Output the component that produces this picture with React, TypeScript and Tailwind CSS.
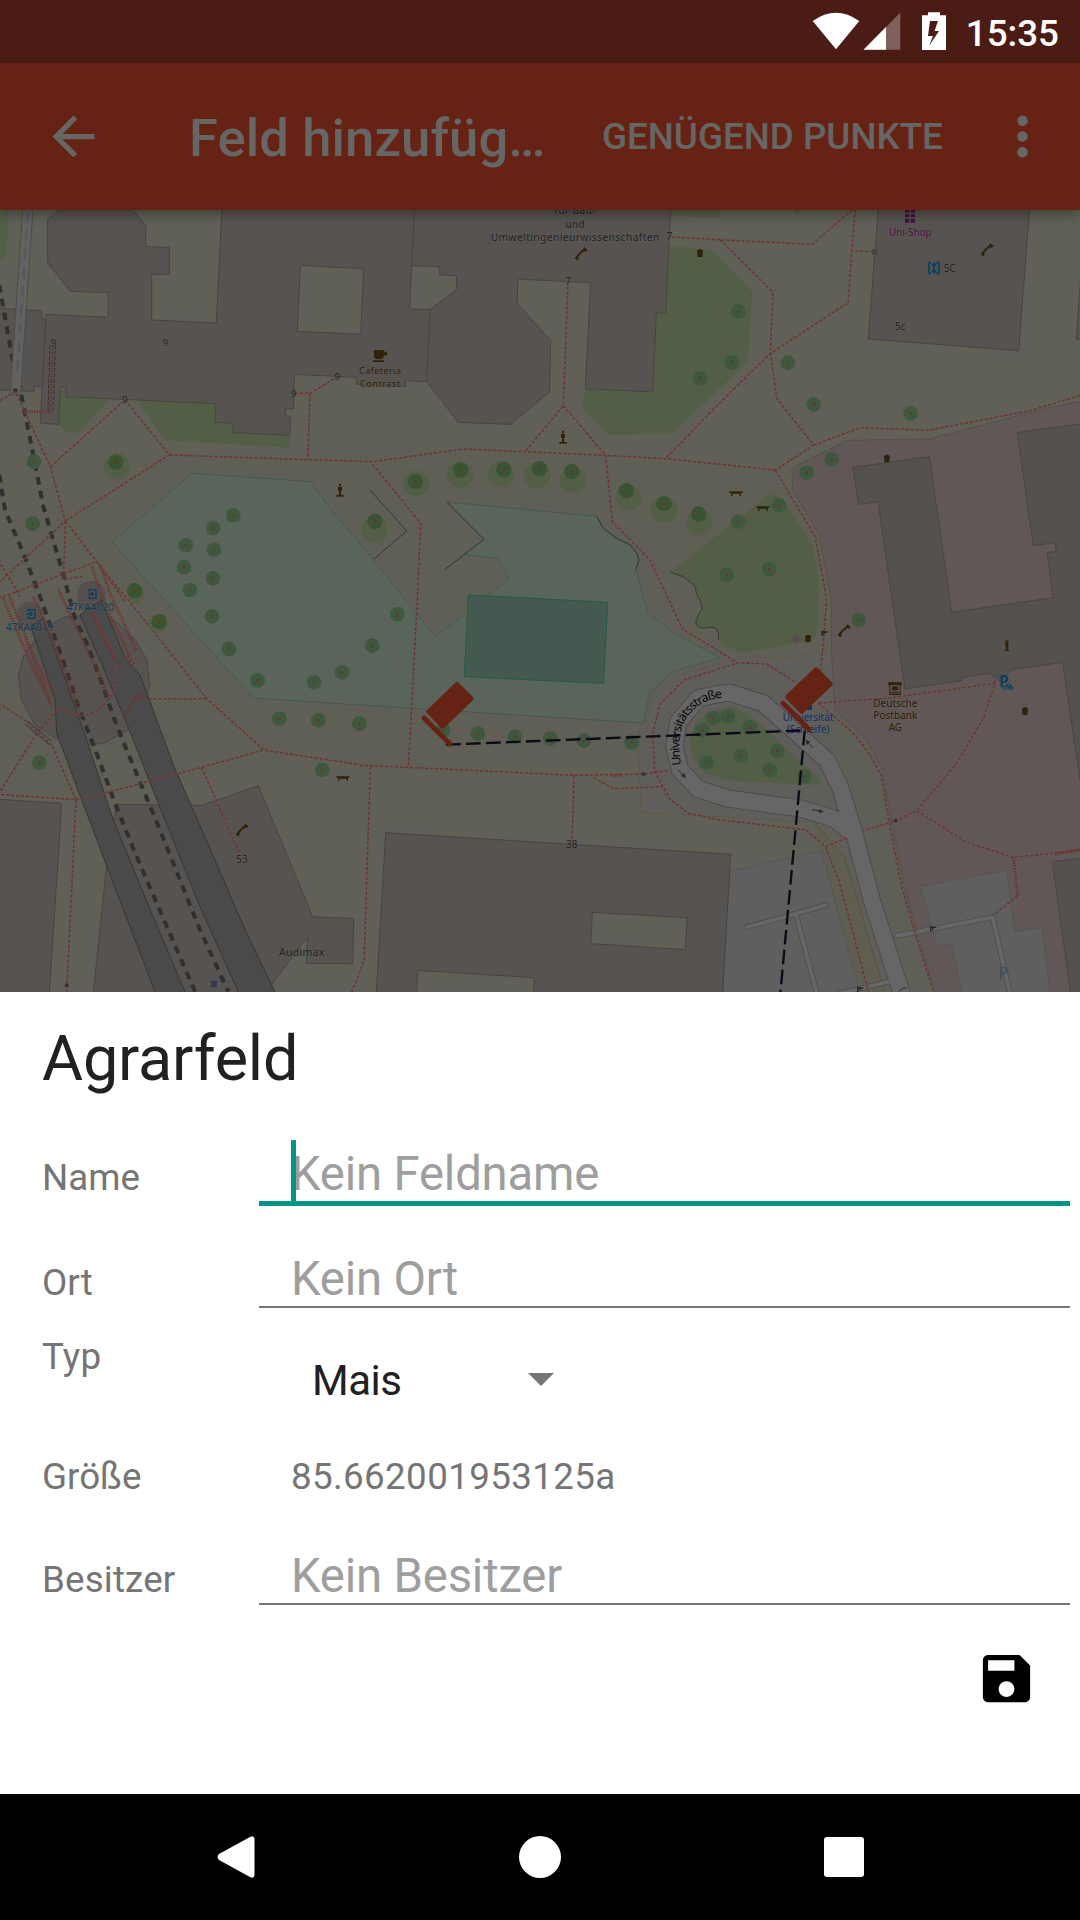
import React from "react";

type Point = [number, number];

const TREES: Point[] = [
  [102, 785], [98, 971], [700, 946], [640, 984], [558, 1036], [642, 1049], [552, 1101], [639, 1135], [570, 1170],
  [636, 1249], [687, 1347], [773, 1441], [942, 1447], [1026, 1417], [838, 1556], [955, 1561], [1078, 1571],
  [118, 1688], [967, 1710], [2101, 535], [2215, 335], [2195, 487], [2364, 488], [2441, 613], [2732, 640],
  [2420, 818], [2495, 778], [2337, 916], [2215, 965], [2180, 1125], [2307, 1107], [2576, 1259], [1192, 1243],
  [1117, 1337], [1330, 1590], [1434, 1601], [1545, 1610], [1651, 1615], [1751, 1622], [1895, 1627],
  [2106, 1592], [2140, 1554], [2120, 1687], [2184, 1550], [2250, 1582], [2332, 1653], [2223, 1667],
  [2310, 1711], [2413, 1730],
];

const BIG_TREES: [number, number, number, number][] = [
  [347, 787, 351, 799], [404, 1172, 408, 1182], [478, 1265, 474, 1272], [1246, 845, 1248, 850], [1382, 810, 1380, 824],
  [1511, 808, 1503, 822], [1618, 806, 1611, 827], [1715, 815, 1719, 840], [1879, 872, 1885, 893],
  [1992, 911, 1992, 930], [2096, 942, 2097, 967], [1125, 964, 1124, 987],
];

function Trees() {
  return (
    <g>
      {BIG_TREES.map(([x, y, hx, hy], i) => {
        const small = i === 1 || i === 2;
        return (
          <g key={i}>
            <circle cx={hx} cy={hy} r={small ? 26 : 39} fill="#525e46" />
            <circle cx={x} cy={y} r={23} fill={i < 3 ? "#3a5430" : "#3a5334"} />
            <circle cx={x} cy={y} r={4.5} fill="#5a3c20" />
          </g>
        );
      })}
      {TREES.map(([x, y], i) => (
        <g key={i}>
          <circle cx={x} cy={y} r={22} fill="#3f573e" />
          <circle cx={x} cy={y} r={4.5} fill="#5a4022" />
        </g>
      ))}
    </g>
  );
}

function Flag({ x, y }: { x: number; y: number }) {
  return (
    <g transform={`translate(${x} ${y})`} fill="#662314" stroke="#662314" strokeLinejoin="round" strokeLinecap="round">
      <path d="M100 -2 L143 41 L57 123 L15 80 Z" transform="translate(-79 0) translate(79 0)" strokeWidth="14" />
      <path d="M0 104 L-1 104" strokeWidth="0" />
      <path d="M1 104 L79 182" strokeWidth="15" transform="translate(0 -5)" />
    </g>
  );
}

function Phone({ x, y }: { x: number; y: number }) {
  return (
    <g transform={`translate(${x} ${y})`} stroke="#30220a" fill="none">
      <path d="M-13 12 Q-4 -4 13 -13" strokeWidth="6" />
      <path d="M-16 10 L-9 17 M8 -16 L17 -8" strokeWidth="8" />
    </g>
  );
}

function Bin({ x, y }: { x: number; y: number }) {
  return <path transform={`translate(${x} ${y})`} d="M-9 -7 H9 L7 11 H-7 Z M-9 -9 H9 V-6 H-9 Z M-5 -12 H5 V-8 H-5 Z" fill="#30220a" />;
}

function Bench({ x, y }: { x: number; y: number }) {
  return <path transform={`translate(${x} ${y})`} d="M-20 -6 H20 V-2 H-20 Z M-15 0 H-11 V8 H-15 Z M11 0 H15 V8 H11 Z M-15 -2 H15 V1 H-15 Z" fill="#30220a" />;
}

function Statue({ x, y }: { x: number; y: number }) {
  return <path transform={`translate(${x} ${y})`} d="M-3 -20 H3 V-13 H-3 Z M-6 -11 H6 V1 H3 V14 H11 V19 H-11 V14 H-3 V1 H-6 Z" fill="#30220a" />;
}

function Gate({ x, y }: { x: number; y: number }) {
  return <path transform={`translate(${x} ${y})`} d="M-7 -8 V8 M-7 -4 H10 M-1 -4 V3" stroke="#222" strokeWidth="4" fill="none" />;
}

function Subway({ x, y }: { x: number; y: number }) {
  return (
    <path
      transform={`translate(${x} ${y})`}
      d="M-9 -7 V-13 H11 V13 H-9 V7 M-15 0 H3 M-3 -6 L3 0 L-3 6"
      stroke="#073f5c"
      strokeWidth="4"
      fill="none"
    />
  );
}

function MapText({ x, y, w, size = 31, fill = "#222222", children }: { x: number; y: number; w?: number; size?: number; fill?: string; children: string }) {
  return (
    <text x={x} y={y} fontSize={size} textAnchor="middle" fill={fill} textLength={w} stroke="#65625d" strokeWidth="5" strokeOpacity="0.4" style={{ paintOrder: "stroke" }}>
      {children}
    </text>
  );
}

const BUILDINGS = [
  "M178 30 L143 58 V188 L211 274 L325 278 V352 L138 343 L121 669 L176 673 L181 560 H198 V590 L646 611 V667 L699 670 V698 L870 706 L872 650 L856 648 V626 H880 L884 523 L1070 532 V553 L1217 559 V542 L1280 545 L1375 667 L1532 673 L1648 576 L1652 421 L1552 311 L1553 237 L1772 248 L1756 566 L1958 576 L1969 338 L1997 340 L2012 20 H666 L649 369 L455 360 V223 H508 V142 L437 140 V76 L398 30 Z M901 196 L1091 206 L1082 403 L892 394 Z M1235 197 L1318 200 V224 L1370 227 V268 L1290 329 L1229 327 Z",
  "M-5 325 L125 332 V358 H137 L127 560 H103 V574 L-5 570 Z",
  "M2635 20 H3089 L3056 452 L2605 417 Z",
  "M3245 195 L3229 418 L3245 419 Z",
  "M70 1370 L55 1425 L65 1500 L105 1575 L170 1617 L268 1634 L315 1628 L380 1592 L430 1510 L449 1460 L441 1380 L405 1318 L350 1268 L300 1240 L235 1248 L190 1252 L130 1285 Z",
  "M-5 1798 L185 1810 L148 2380 H-5 Z",
  "M280 2380 L320 1995 L350 1813 L607 1816 L775 1757 L938 2151 L1061 2155 L1058 2291 L919 2290 L923 2210 L812 2358 L795 2380 Z",
  "M1157 1898 L2192 1963 L2168 2380 H1129 Z M1777 2137 L2062 2153 L2056 2249 L1772 2231 Z M1253 2311 L1603 2333 L1601 2380 H1250 Z",
];

const MALL =
  "M2559 802 L2788 770 L2855 1237 L3160 1193 L3142 1058 L3169 1054 L3165 1028 L3100 1037 L3052 698 L3245 671 V1770 L3188 1387 L3035 1408 L3000 1445 L2968 1419 L2885 1432 V1442 L2715 1466 L2676 1199 L2634 905 L2575 913 Z";

const MALL_NORTH = "M2848 1170 L2855 1237 L3160 1193 L3157 1170 Z";

const PATHS = [
  "M0 602 L47 575 L73 632 L151 800 L196 963 L-5 1150",
  "M151 800 L375 600 L508 765 L196 963",
  "M508 765 L924 779 L1118 785 L1390 747 L1575 755 L1817 766 L2000 776 L2326 810",
  "M884 580 H930 L1012 530 M930 580 L924 779",
  "M1118 793 L1262 970 L1252 1199 L1225 1702",
  "M1704 244 L1690 617 L1575 755 M1690 617 L1817 766 L1837 965 L1950 1080 L2048 1288 L2160 1355 L2205 1385",
  "M2000 772 L2160 608 L2311 460 L2544 308 L2566 20 M2556 30 L2436 133 L2160 119 L2010 111 M2160 119 L2319 277 L2311 460 L2331 597 L2441 735 L2326 810",
  "M2441 735 L2581 683 L2785 691 L3090 632 L3245 585",
  "M2326 810 L2446 1010 L2480 1199 L2462 1420",
  "M196 963 L290 1085 L445 1275 L620 1496 L792 1650 L1080 1694",
  "M196 963 L190 1140 L250 1128 M-5 1195 L290 1085 L375 1205 M-5 1080 L60 1190",
  "M445 1496 H620 M-5 1508 L80 1565 L155 1635 L228 1799 L-5 1783 L110 1600 L170 1530",
  "M228 1799 L330 1775 L605 1702 L792 1650 M605 1702 L720 1965 M228 1799 L214 2090 L200 2375",
  "M1080 1696 L1400 1710 L1722 1726 L1935 1722 L2006 1711 M1780 1732 L1840 1766 L1985 1760",
  "M1722 1726 L1716 1925 M1111 1700 L1100 2040 L1093 2275 L1075 2330 L1053 2380",
  "M2383 1445 L2300 1392 L2215 1388 L2052 1440 L1980 1512 L1958 1600 L1964 1715 L2010 1798 L2065 1840 L2160 1860 L2418 1889 L2476 1940 L2515 2035 L2565 2220 L2605 2375",
  "M2455 1509 L2560 1600 L2610 1665 L2643 1725 L2670 1880 L2705 2060 L2750 2215 L2802 2380",
  "M2455 1509 L2660 1495 L2985 1450 L2950 1555 L2870 1690 L2750 1832 L2687 1862 L2590 1893 M2476 1940 L2545 1912",
  "M2750 1832 L2900 1927 L3040 1972 L3245 1950 M3053 2087 L2980 2145 M2985 1450 V1435",
  "M170 1530 L245 1547 Q310 1540 345 1465 Q360 1430 345 1375 L270 1210 M410 1370 L398 1400 L375 1360",
  "M2565 152 L2615 155",
];

const STEPS = [
  "M10 1195 L90 1385 L155 1520 M28 1190 L110 1390 L160 1480 M75 1310 L150 1500 M100 1190 L155 1310 L240 1535",
  "M175 1170 L300 1430 L325 1500 M275 1100 L310 1200 L395 1385 M300 1095 L330 1180 L408 1350 M275 1240 L345 1380",
  "M158 440 L151 635 H75",
  "M440 1490 L410 1485 L375 1550",
  "M3040 1972 L3053 2087 M3165 1962 L3245 1948 M1835 1727 L1865 1725",
];

const ROADS =
  "M2705 2380 L2615 2100 L2560 1890 L2520 1760 L2480 1680 L2380 1590 L2290 1510 L2190 1478 L2150 1483 L2095 1495 L2035 1565 L2023 1640 L2040 1710 L2095 1767 L2180 1795 L2400 1825 L2500 1855 L2550 1895";
const LANES = "M2240 2182 L2477 2116 M2388 2142 L2450 2380 M2690 2207 L2978 2152 L3030 2380 M2520 2380 L2680 2342";

function CampusMap() {
  return (
    <svg className="block h-[782px] w-full" viewBox="0 30 3240 2346" fontFamily='"Noto Sans", sans-serif'>
      <rect x="0" y="0" width="3240" height="2400" fill="#606056" />
      <path d="M0 975 L500 760 L1400 750 L2326 812 L2450 1010 L2480 1380 L1400 1730 L900 1660 L300 1790 L0 1780 Z" fill="#605f55" />

      <g fill="#525e46">
        <path d="M-5 20 H28 L18 177 H-5 Z" />
        <path d="M181 560 H198 V590 L330 597 L236 698 H200 L176 673 Z" />
        <path d="M410 602 L646 611 V667 L699 670 V698 L870 706 V743 L497 720 Z" />
        <path d="M2012 20 H2165 L2155 52 L2012 48 Z" />
        <path d="M2376 20 H2410 L2391 46 Z" />
        <path d="M2007 137 L2135 150 L2257 275 L2243 487 L2160 565 L2016 700 L1825 705 L1749 625 L1756 566 L1958 576 L1969 338 L1997 340 Z" />
      </g>

      <g fill="#59655a" stroke="#365a3b" strokeWidth="2">
        <path d="M575 820 L934 845 L993 930 L1080 1031 L1217 1199 L1306 1310 L1402 1236 L1527 1135 L1493 1075 L1393 1063 L1452 1018 L1341 906 L1790 949 L1808 982 L1845 1012 L1891 1035 L1912 1062 L1917 1082 L1907 1108 L1925 1170 L1944 1241 L2034 1307 L2160 1373 L2012 1418 L1948 1481 L1930 1569 L1080 1515 L760 1494 L466 1170 L337 1026 Z" />
        <path d="M1405 1185 L1823 1207 L1811 1450 L1393 1430 Z" fill="#445a51" stroke="#255a45" strokeWidth="3" />
      </g>

      <path
        d="M1923 1570 L1912 1610 L1923 1838 L2160 1850 L2445 1867 L2535 1975 L2655 2380 H2810 L2710 2060 L2643 1700 L2505 1530 L2495 1350 L2345 1375 L2240 1370 L2030 1424 L1960 1485 L1937 1567 Z"
        fill="#605e5a"
        stroke="#5b5840"
        strokeWidth="2"
      />
      <path d="M2450 1500 L2505 1530 L2643 1700 L2710 2060 L2810 2380 H2690 L2560 1850 Z" fill="#5f5f57" />
      <path d="M2465 1952 L2445 1867 L2535 1975 L2655 2380 H2580 Z" fill="#5f5e50" />
      <path d="M2445 1867 L2535 1975 L2655 2380" fill="none" stroke="#545133" strokeWidth="2" />
      <path
        d="M2011 1117 L2318 875 L2370 930 L2435 1030 L2457 1130 L2450 1300 L2440 1320 L2225 1360 L2160 1328 L2155 1320 C2158 1275 2140 1280 2110 1285 C2075 1280 2088 1255 2105 1230 C2110 1200 2085 1195 2087 1160 L2050 1130 Z"
        fill="#525e46"
      />
      <path
        d="M2543 721 L2787 717 L3160 620 L3245 603 V2380 H2805 L2715 2070 L2643 1700 L2600 1620 L2505 1530 L2495 1360 L2493 1199 L2458 1005 L2377 870 L2380 803 Z"
        fill="#615757"
        stroke="#504a45"
        strokeWidth="2"
      />
      <g fill="#5f5f5f" stroke="#555052" strokeWidth="2">
        <path d="M2761 2059 L3020 2012 L3044 2194 L3127 2182 L3150 2380 H2887 L2855 2233 L2811 2236 Z" />
        <path d="M2188 2015 L2465 1952 L2580 2380 H2165 Z" />
      </g>

      <g fill="#575350" stroke="#484440" strokeWidth="3" fillRule="evenodd">
        {BUILDINGS.map((d) => (
          <path key={d} d={d} />
        ))}
        <g fill="#55524e">
          <path d={MALL} />
          <path d="M3157 1986 L3245 1974 V2380 H3212 Z" />
        </g>
        <path d="M1243 30 L1235 197 M1290 329 L1280 545" fill="none" />
      </g>
      <path d={MALL_NORTH} fill="none" />

      <g fill="#55504d">
        <circle cx="90" cy="1244" r="39" />
        <circle cx="274" cy="1185" r="43" />
      </g>

      <g fill="none" stroke="#2f3a2f" strokeWidth="3">
        <path d="M1110 870 L1220 993 L1122 1077 M1341 906 L1452 1018 L1334 1109" />
        <path d="M1790 949 L1808 982 L1845 1012 L1891 1035 L1912 1062 L1917 1082 L1907 1108" />
        <path d="M2011 1117 L2050 1130 L2087 1160 C2085 1195 2110 1200 2105 1230 C2088 1255 2075 1280 2110 1285 C2140 1280 2158 1275 2155 1320" />
      </g>

      <g fill="#4a4a4a" stroke="#353535" strokeWidth="3">
        <path d="M92 1278 L165 1500 L170 1600 L245 1800 L340 2050 L467 2380 H557 L455 2140 L340 1860 L265 1635 L200 1450 L130 1255 Z" />
        <path d="M240 1245 L300 1380 L380 1570 L475 1810 L600 2120 L717 2380 H827 L740 2200 L610 1900 L520 1695 L450 1505 L420 1425 L375 1375 L305 1200 Z" />
      </g>

      <g fill="none" stroke="#303030" strokeWidth="12" strokeDasharray="23 19">
        <path d="M-2 255 L36 470 L64 585 L95 740 L130 920 L186 1110 L225 1255 L260 1330 L310 1460 L340 1550 L380 1650 L430 1770 L480 1890 L540 2040 L600 2190 L685 2375" />
        <path d="M-2 825 L15 930 L70 1060 L115 1175 L145 1260 L190 1385 L235 1520 L290 1660 L345 1810 L410 1970 L490 2155 L585 2375" />
      </g>

      <path d="M84 20 L47 570" stroke="#4c4c4d" strokeWidth="34" strokeLinecap="round" />
      <path d="M84 20 L47 570" stroke="#626263" strokeWidth="28" strokeLinecap="round" />
      <path d="M84 34 L50 540" stroke="#575757" strokeWidth="8" strokeDasharray="32 24" />
      <circle cx="46" cy="572" r="7" fill="#303030" />

      <path
        d="M2070 1620 L2090 1560 L2160 1525 L2195 1520 L2250 1545 L2463 1740 V1756 L2170 1740 L2110 1715 L2075 1670 Z"
        fill="#525e46"
      />
      <g fill="none" strokeLinejoin="round" strokeLinecap="round">
        <path d={LANES} stroke="#4d4d4d" strokeWidth="17" />
        <path d={ROADS} stroke="#484848" strokeWidth="54" />
        <path d={LANES} stroke="#666" strokeWidth="12" />
        <path d={ROADS} stroke="#666" strokeWidth="49" />
      </g>

      <g fill="none" strokeLinejoin="round">
        {PATHS.map((d) => (
          <g key={d}>
            <path d={d} stroke="#68655e" strokeOpacity="0.35" strokeWidth="7" />
            <path d={d} stroke="#6c3431" strokeWidth="4.5" strokeDasharray="10 5" />
          </g>
        ))}
        {STEPS.map((d) => (
          <path key={d} d={d} stroke="#6c3431" strokeWidth="9" strokeDasharray="4 4" />
        ))}
        <path d="M150 435 L144 630 M166 435 L160 632" stroke="#333" strokeWidth="3" strokeDasharray="12 5" />
        <path d="M82 1562 L155 1624 M74 1571 L148 1634" stroke="#333" strokeWidth="3" />
      </g>

      <Trees />

      <g fill="#333">
        <circle cx="1931" cy="1722" r="6" />
        <circle cx="2687" cy="1862" r="6" />
        <circle cx="200" cy="2356" r="6" />
        <rect x="633" y="2343" width="18" height="18" fill="#32375a" />
        <rect x="2616" y="147" width="17" height="17" fill="#484640" />
        <path d="M2390 1302 L2406 1318 L2390 1334 L2374 1318 Z" fill="#55504d" />
      </g>

      <g fill="none" stroke="#282828" strokeWidth="3">
        <path d="M2035 1710 L2054 1730" />
        <path d="M2440 1644 L2420 1624" />
        <path d="M2436 1829 L2466 1834" />
        <path d="M2698 2375 Q2700 2366 2720 2363" />
      </g>
      <g fill="#282828">
        <path d="M2058 1735 L2043 1728 L2053 1719 Z" />
        <path d="M2416 1619 L2431 1625 L2421 1635 Z" />
        <path d="M2472 1835 L2456 1839 L2458 1827 Z" />
      </g>

      <Phone x={1743} y={161} />
      <Phone x={2961} y={149} />
      <Phone x={2532} y={1292} />
      <Phone x={726} y={1890} />
      <Bin x={2100} y={160} />
      <Bin x={2661} y={776} />
      <Bin x={2424} y={1316} />
      <Bin x={3075} y={1534} />
      <Bench x={2208} y={880} />
      <Bench x={2289} y={925} />
      <Bench x={1029} y={1735} />
      <Statue x={1020} y={871} />
      <Statue x={1689} y={712} />
      <Gate x={2473} y={1300} />
      <Gate x={2799} y={2186} />
      <Gate x={2580} y={2368} />
      <Subway x={94} y={1242} />
      <Subway x={277} y={1182} />

      <path d="M1122 450 H1151 V455 H1161 V466 H1151 V470 Q1150 477 1142 477 H1130 Q1122 476 1122 468 Z M1119 481 H1152 V486 H1119 Z" fill="#30220a" />
      <path d="M2715 30 H2728 V38 H2715 Z M2732 30 H2745 V38 H2732 Z M2715 42 H2728 V52 H2715 Z M2732 42 H2745 V52 H2732 Z M2715 56 H2728 V68 H2715 Z M2732 56 H2745 V68 H2732 Z" fill="#451245" />
      <path d="M2794 188 H2787 V220 H2794 M2809 188 H2817 V220 H2809" fill="none" stroke="#073f5c" strokeWidth="5" />
      <path d="M2802 186 L2811 197 H2805 V211 H2811 L2802 222 L2793 211 H2799 V197 H2793 Z" fill="#073f5c" />
      <path d="M2665 1447 H2705 V1456 H2702 V1485 H2668 V1456 H2665 Z" fill="#30220a" />
      <path d="M2671 1455 H2699 V1481 H2671 Z" fill="#615757" />
      <ellipse cx="2685" cy="1465" rx="10" ry="7" fill="#30220a" />
      <path d="M2673 1477 H2697" stroke="#30220a" strokeWidth="3" />
      <g fill="none" stroke="#073f5c" strokeWidth="3">
        <circle cx="3016" cy="1463" r="6" />
        <circle cx="3032" cy="1463" r="6" />
        <path d="M3016 1463 L3021 1452 H3030 L3032 1463 M3021 1453 L3026 1463 H3032" />
      </g>
      <rect x="2420" y="1514" width="16" height="16" fill="#073f5c" />

      <MapText x={1725} y={42} w={124}>für Bau-</MapText>
      <MapText x={1725} y={83} w={58}>und</MapText>
      <MapText x={1725} y={123} w={506}>Umweltingenieurwissenschaften</MapText>
      <MapText x={2008} y={121} size={30}>7</MapText>
      <MapText x={1704} y={254} size={30}>7</MapText>
      <MapText x={160} y={437} size={29}>9</MapText>
      <MapText x={496} y={438} size={29}>9</MapText>
      <MapText x={375} y={608} size={29}>9</MapText>
      <MapText x={881} y={590} size={29}>9</MapText>
      <MapText x={1012} y={540} size={29}>9</MapText>
      <MapText x={1140} y={523} size={28} w={126} fill="#2b1d08">Cafeteria</MapText>
      <MapText x={1140} y={560} size={28} w={120} fill="#2b1d08">Contrast</MapText>
      <MapText x={2731} y={109} size={30} w={128} fill="#451245">Uni-Shop</MapText>
      <MapText x={2849} y={215} size={30}>5C</MapText>
      <MapText x={2701} y={390} size={30}>5c</MapText>
      <MapText x={89} y={1294} size={30} w={142} fill="#0f3a57">47KAA019</MapText>
      <MapText x={271} y={1234} size={30} w={142} fill="#0f3a57">47KAA020</MapText>
      <MapText x={726} y={1990} size={30}>53</MapText>
      <MapText x={1715} y={1945} size={30}>38</MapText>
      <MapText x={905} y={2267} size={32} w={136}>Audimax</MapText>
      <MapText x={2686} y={1520} size={30} w={132} fill="#2b1d08">Deutsche</MapText>
      <MapText x={2686} y={1556} size={30} w={132} fill="#2b1d08">Postbank</MapText>
      <MapText x={2686} y={1593} size={30} w={40} fill="#2b1d08">AG</MapText>
      <MapText x={2424} y={1563} size={30} w={152} fill="#0e2f66">Universität</MapText>
      <MapText x={2424} y={1600} size={30} w={128} fill="#0e2f66">(Schleife)</MapText>
      <text x="3021" y="1352" fontSize="46" fontFamily='"DejaVu Serif", serif' fontWeight="700" textAnchor="middle" fill="#30220a">i</text>
      <text x="3011" y="1461" fontSize="46" fontWeight="700" textAnchor="middle" fill="#073f5c">P</text>
      <text x="3009" y="2336" fontSize="46" textAnchor="middle" fill="#38505e">P</text>

      <path id="loop-label" d="M2042 1696 L2038 1640 C2037 1590 2052 1557 2078 1532 C2105 1505 2140 1493 2190 1491" fill="none" />
      <text fontSize="37" fill="#080808">
        <textPath href="#loop-label" textLength="274">Universitätsstraße</textPath>
      </text>

      <g fill="none" stroke="#0a0a18" strokeWidth="7" strokeDasharray="44 16">
        <path d="M1338 1634 L2414 1591" />
        <path d="M2414 1592 L2341 2380" />
      </g>
      <Flag x={1271} y={1455} />
      <Flag x={2268 + 80} y={1411} />
    </svg>
  );
}

function StatusBar() {
  return (
    <div className="flex h-[63px] shrink-0 items-center justify-end bg-[#4a1c13] pr-[21px] text-white">
      <svg className="mr-[1px] h-[63px] w-[155px]" viewBox="810 0 155 63" fill="currentColor">
        <path d="M812.7 21 Q836 4.500 859.300 21 L836 49.300 Z" />
        <path d="M863.500 49.700 L900.300 12.800 V49.700 Z" fillOpacity="0.3" />
        <path d="M863.500 49.700 L886 27 V49.700 Z" />
        <path
          fillRule="evenodd"
          d="M928 12.300 H940 V15.300 H946 V50 H922 V15.300 H928 Z M930 21 L928 36 H933 L929 46 L939 31 H934.500 L938 21 Z"
        />
      </svg>
      <span className="mt-[4px] text-[36.75px] font-medium leading-[63px]">15:35</span>
    </div>
  );
}

function AppBar() {
  return (
    <header className="relative z-10 flex h-[147px] shrink-0 items-center bg-[#662314] pl-[42px] font-medium text-[#666] shadow-[0_4px_12px_rgba(0,0,0,0.35)]">
      <svg className="size-[63px] shrink-0" viewBox="0 0 24 24" fill="currentColor">
        <path d="M20 11H7.830l5.590-5.590L12 4l-8 8 8 8 1.410-1.410L7.830 13H20v-2z" />
      </svg>
      <h1 className="ml-[84px] mt-[4px] w-[413px] whitespace-nowrap text-[52.5px] tracking-[0.15px]">Feld hinzufüg…</h1>
      <span className="mt-[1px] w-[389px] whitespace-nowrap text-[36.75px]">GENÜGEND PUNKTE</span>
      <svg className="size-[63px] shrink-0" viewBox="0 0 24 24" fill="currentColor">
        <path d="M12 8c1.100 0 2-.9 2-2s-.9-2-2-2-2 .9-2 2 .9 2 2 2zm0 2c-1.100 0-2 .9-2 2s.9 2 2 2 2-.9 2-2-.9-2-2-2zm0 6c-1.100 0-2 .9-2 2s.9 2 2 2 2-.9 2-2-.9-2-2-2z" />
      </svg>
    </header>
  );
}

const label = "w-[217px] shrink-0 text-[36.75px] leading-[47px] text-[#757575]";
const field = "pl-[32px] text-[47.25px] leading-[54px] tracking-[-0.18px] text-[#9e9e9e]";

function FieldSheet() {
  return (
    <section className="flex h-[802px] shrink-0 flex-col bg-white pl-[42px] pr-[10px]">
      <h2 className="h-[133px] text-[63px] leading-[133px] tracking-[-0.2px] text-[#212121]">Agrarfeld</h2>
      <div className="flex h-[81px] items-end">
        <span className={`${label} pb-[5px]`}>Name</span>
        <div className={`${field} relative grow border-b-[5px] border-[#009688]`}>
          Kein Feldname
          <span className="absolute bottom-0 left-[32px] h-[61px] w-[5px] bg-[#009688]" />
        </div>
      </div>
      <div className="flex h-[102px] items-end">
        <span className={`${label} pb-[2px]`}>Ort</span>
        <div className={`${field} grow border-b-2 border-[#757575]`}>Kein Ort</div>
      </div>
      <div className="flex h-[132px] items-start">
        <span className={`${label} pt-[25px] tracking-[0.2px]`}>Typ</span>
        <div className="mt-[45px] flex items-center pl-[53px]">
          <span className="w-[216px] text-[42px] leading-[56px] tracking-[-0.5px] text-[#212121]">Mais</span>
          <svg className="mb-[3px] h-[13px] w-[26px]" viewBox="0 0 26 13" fill="#757575">
            <path d="M0 0H26L13 13Z" />
          </svg>
        </div>
      </div>
      <div className="flex h-[73px] items-center">
        <span className={label}>Größe</span>
        <span className="pl-[32px] text-[36.75px] leading-[47px] tracking-[0.36px] text-[#757575]">85.662001953125a</span>
      </div>
      <div className="flex h-[92px] items-end">
        <span className={`${label} pb-[2px] tracking-[0.15px]`}>Besitzer</span>
        <div className={`${field} grow border-b-2 border-[#757575]`}>Kein Besitzer</div>
      </div>
      <div className="flex justify-end pr-[32px] pt-[42px]">
        <svg className="size-[63px]" viewBox="0 0 24 24" fill="#000">
          <path d="M17 3H5c-1.110 0-2 .9-2 2v14c0 1.100.89 2 2 2h14c1.100 0 2-.9 2-2V7l-4-4zm-5 16c-1.660 0-3-1.340-3-3s1.340-3 3-3 3 1.340 3 3-1.340 3-3 3zm3-10H5V5h10v4z" />
        </svg>
      </div>
    </section>
  );
}

function NavBar() {
  return (
    <nav className="flex h-[126px] shrink-0 items-center bg-black pl-[217px]">
      <svg className="h-[42px] w-[38px]" viewBox="0 0 38 42" fill="#fff">
        <path d="M2 18 L33 1 Q37 -1 37.500 3 V39 Q37 43 33 41 L2 24 Q-1 21 2 18 Z" />
      </svg>
      <span className="ml-[264px] size-[42px] rounded-full bg-white" />
      <span className="ml-[263px] size-[40px] rounded-[3px] bg-white" />
    </nav>
  );
}

export default function App() {
  return (
    <div className="flex h-[1920px] w-[1080px] flex-col overflow-hidden bg-white font-['Roboto',sans-serif]">
      <StatusBar />
      <AppBar />
      <main className="h-[782px] shrink-0">
        <CampusMap />
      </main>
      <FieldSheet />
      <NavBar />
    </div>
  );
}
